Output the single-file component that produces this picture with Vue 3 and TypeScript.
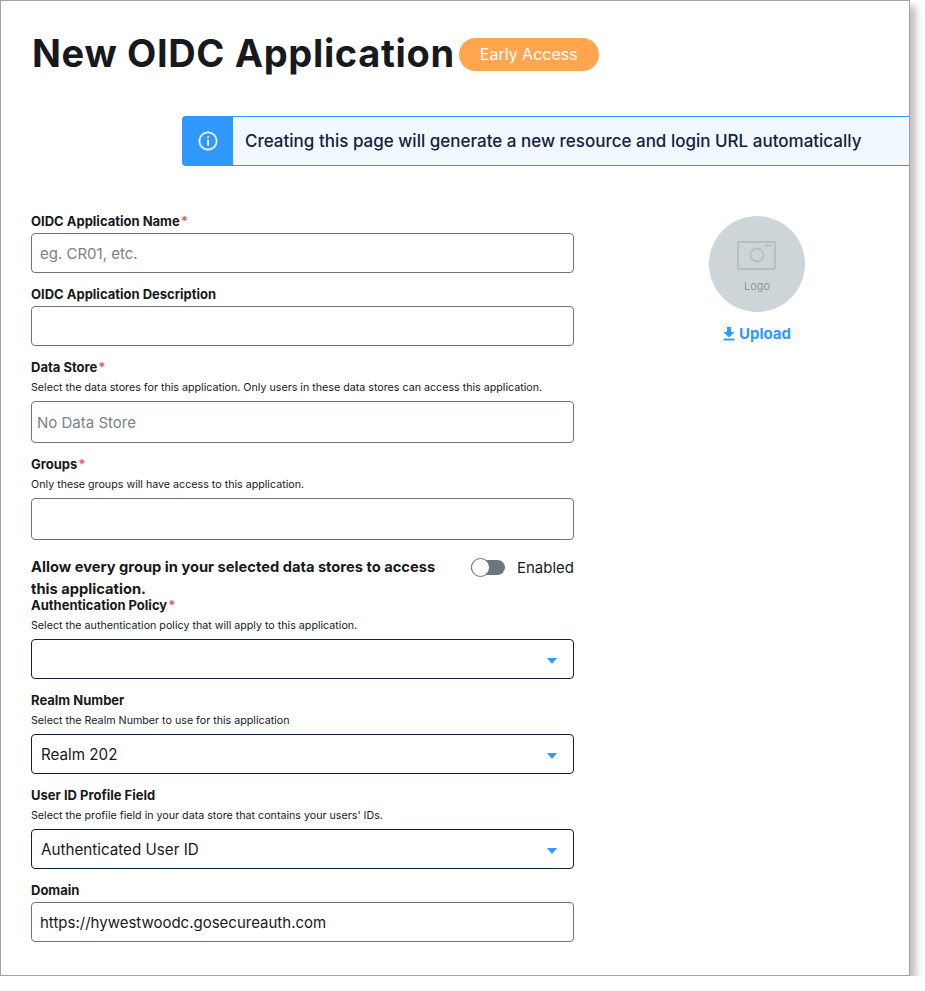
<template>
  <div class="frame">
    <header class="head">
      <h1 class="title">New OIDC Application</h1>
      <span class="badge">Early Access</span>
    </header>

    <div class="banner">
      <div class="banner-tab">
        <svg width="20" height="20" viewBox="0 0 20 20" fill="none">
          <circle cx="10" cy="10" r="8.6" stroke="#fff" stroke-width="1.7" />
          <rect x="9.1" y="8.6" width="1.9" height="6" fill="#fff" />
          <rect x="9.1" y="5.3" width="1.9" height="1.9" fill="#fff" />
        </svg>
      </div>
      <div class="banner-text">Creating this page will generate a new resource and login URL automatically</div>
    </div>

    <div class="body">
      <form class="form" @submit.prevent>
        <template v-for="f in fieldsTop" :key="f.label">
          <div class="field" :class="f.cls">
            <label class="lbl">{{ f.label }}<span v-if="f.req" class="req">*</span></label>
            <p v-if="f.help" class="help">{{ f.help }}</p>
            <div class="box" :class="f.boxCls">
              <span v-if="f.value" class="val" :class="f.valCls">{{ f.value }}</span>
            </div>
          </div>
        </template>

        <div class="allow">
          <div class="allow-text">Allow every group in your selected data stores to access this application.</div>
          <div class="toggle-wrap">
            <span class="toggle"><span class="knob"></span></span>
            <span class="toggle-lbl">Enabled</span>
          </div>
        </div>

        <div v-for="f in selects" :key="f.label" class="field sel-field">
          <label class="lbl">{{ f.label }}<span v-if="f.req" class="req">*</span></label>
          <p class="help">{{ f.help }}</p>
          <div class="box select">
            <span class="val">{{ f.value }}</span>
            <span class="caret"></span>
          </div>
        </div>

        <div class="field domain">
          <label class="lbl">Domain</label>
          <div class="box"><span class="val">https://hywestwoodc.gosecureauth.com</span></div>
        </div>
      </form>

      <aside class="side">
        <div class="logo">
          <svg width="40" height="30" viewBox="0 0 40 30" fill="none">
            <rect x="1" y="1" width="37" height="27" rx="1.5" stroke="#b4bfc3" stroke-width="1.8" />
            <circle cx="20" cy="14" r="6.5" stroke="#b4bfc3" stroke-width="1.8" />
            <rect x="28" y="3.5" width="7" height="2" fill="#b4bfc3" />
          </svg>
          <span class="logo-lbl">Logo</span>
        </div>
        <div class="upload">
          <svg width="12" height="14" viewBox="0 0 12 14" fill="#2f99ff">
            <path d="M4 0h4v5h3.4L6 10.4.6 5H4z" />
            <rect x="0.5" y="11.6" width="11" height="1.9" />
          </svg>
          <span>Upload</span>
        </div>
      </aside>
    </div>
  </div>
</template>

<script setup lang="ts">
interface Field {
  label: string
  req?: boolean
  help?: string
  value?: string
  cls?: string
  boxCls?: string
  valCls?: string
}

const fieldsTop: Field[] = [
  { label: 'OIDC Application Name', req: true, value: 'eg. CR01, etc.', valCls: 'ph' },
  { label: 'OIDC Application Description' },
  {
    label: 'Data Store',
    req: true,
    help: 'Select the data stores for this application. Only users in these data stores can access this application.',
    value: 'No Data Store',
    valCls: 'ph tight',
    boxCls: 'tall',
  },
  {
    label: 'Groups',
    req: true,
    help: 'Only these groups will have access to this application.',
    boxCls: 'tall',
  },
]

const selects: Field[] = [
  {
    label: 'Authentication Policy',
    req: true,
    help: 'Select the authentication policy that will apply to this application.',
  },
  {
    label: 'Realm Number',
    help: 'Select the Realm Number to use for this application',
    value: 'Realm 202',
  },
  {
    label: 'User ID Profile Field',
    help: "Select the profile field in your data store that contains your users' IDs.",
    value: 'Authenticated User ID',
  },
]
</script>

<style scoped>
.frame {
  box-sizing: border-box;
  width: 910px;
  height: 976px;
  background: #fff;
  border: 1px solid #a3a3a3;
  box-shadow: 6px 6px 7px rgba(0, 0, 0, 0.25);
  overflow: hidden;
  font-family: Inter, "Noto Sans", sans-serif;
  color: #17191c;
}
.head {
  display: flex;
  align-items: center;
  gap: 4px;
  padding: 29px 0 0 31px;
  height: 46px;
}
.title {
  margin: 0;
  font-size: 38px;
  line-height: 46px;
  font-weight: 700;
  letter-spacing: 0.65px;
  white-space: nowrap;
}
.badge {
  display: flex;
  align-items: center;
  justify-content: center;
  width: 140px;
  height: 33px;
  margin-top: 2px;
  border-radius: 17px;
  background: #ffa64f;
  color: #fff;
  font-size: 16px;
}
.banner {
  display: flex;
  height: 50px;
  margin: 40px 0 0 181px;
  box-sizing: border-box;
  border: 1px solid #2f99ff;
  border-right: 0;
  border-radius: 4px 0 0 4px;
  background: #f1f8ff;
}
.banner-tab {
  width: 50px;
  background: #2f99ff;
  display: flex;
  align-items: center;
  justify-content: center;
}
.banner-text {
  padding-left: 12px;
  align-self: center;
  font-size: 17px;
  font-weight: 500;
  color: #10243d;
  white-space: nowrap;
}
.body {
  display: flex;
  padding: 48px 0 0 30px;
}
.form {
  width: 543px;
  flex: none;
}
.field {
  margin-bottom: 14px;
}
.lbl {
  display: block;
  height: 16px;
  line-height: 15px;
  margin-bottom: 3px;
  font-size: 13px;
  font-weight: 700;
  white-space: nowrap;
}
.req {
  color: #ee5a64;
  margin-left: 1px;
}
.help {
  margin: 5px 0 6px;
  height: 14px;
  line-height: 14px;
  font-size: 10.7px;
  white-space: nowrap;
}
.box {
  box-sizing: border-box;
  display: flex;
  align-items: center;
  height: 40px;
  padding: 0 8px;
  border: 1px solid #6c757d;
  border-radius: 4px;
}
.box.tall {
  height: 42px;
}
.val {
  font-size: 15px;
}
.ph {
  color: #7a8288;
}
.tight {
  margin-left: -3px;
}
.allow {
  display: flex;
  justify-content: space-between;
  align-items: flex-start;
  margin-bottom: -2px;
}
.allow-text {
  width: 420px;
  padding-top: 2px;
  font-size: 14.7px;
  line-height: 22px;
  font-weight: 700;
}
.toggle-wrap {
  display: flex;
  align-items: center;
  gap: 12px;
  height: 18px;
  margin-top: 4px;
}
.toggle {
  position: relative;
  display: block;
  width: 34px;
  height: 15px;
  border-radius: 8px;
  background: #6c757d;
}
.knob {
  position: absolute;
  left: 0;
  top: -2px;
  box-sizing: border-box;
  width: 19px;
  height: 19px;
  border-radius: 50%;
  background: #fff;
  border: 1px solid #6c757d;
}
.toggle-lbl {
  font-size: 15px;
}
.select {
  position: relative;
  border-color: #0f2233;
  padding-left: 9px;
}
.select .val {
  font-size: 15.2px;
}
.caret {
  position: absolute;
  right: 16px;
  top: 18px;
  width: 0;
  height: 0;
  border-left: 5px solid transparent;
  border-right: 5px solid transparent;
  border-top: 6px solid #2f99ff;
}
.side {
  display: flex;
  flex-direction: column;
  align-items: center;
  width: 96px;
  margin-left: 135px;
  margin-top: 2px;
}
.logo {
  display: flex;
  flex-direction: column;
  align-items: center;
  box-sizing: border-box;
  width: 96px;
  height: 96px;
  padding-top: 25px;
  border-radius: 50%;
  background: #ced5d8;
}
.logo-lbl {
  margin-top: 8px;
  font-size: 11px;
  color: #8f999d;
}
.upload {
  display: flex;
  align-items: center;
  gap: 4px;
  margin-top: 12px;
  font-size: 15px;
  font-weight: 700;
  color: #2f99ff;
  white-space: nowrap;
}
</style>

<style>
html, body {
  background: #fff;
}
</style>
